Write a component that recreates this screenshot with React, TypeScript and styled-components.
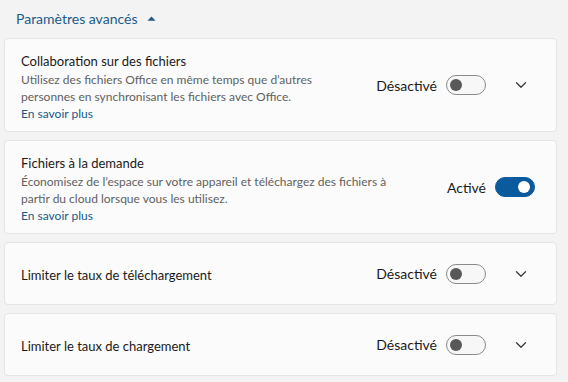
import styled, { createGlobalStyle } from "styled-components";

const GlobalStyle = createGlobalStyle`
  html, body {
    margin: 0;
    padding: 0;
    background: #f3f3f3;
  }
  body {
    font-family: Lato, "Noto Sans", sans-serif;
    color: #1a1a1a;
  }
`;

const Page = styled.div`
  width: 568px;
  height: 382px;
  overflow: hidden;
  padding: 8px 11px 0 4px;
  box-sizing: border-box;
`;

const SectionHeader = styled.button`
  display: flex;
  align-items: center;
  gap: 10px;
  border: none;
  background: none;
  padding: 0 0 0 12px;
  height: 20px;
  font: inherit;
  font-size: 14px;
  color: #1c5b88;
  cursor: pointer;
  margin-bottom: 10px;
`;

const List = styled.div`
  display: flex;
  flex-direction: column;
  gap: 8px;
`;

const Card = styled.div<{ $tall?: boolean }>`
  display: flex;
  align-items: center;
  height: ${(p) => (p.$tall ? "94px" : "63px")};
  box-sizing: border-box;
  padding: 0 21px 0 16px;
  background: #fbfbfb;
  border: 1px solid #e5e5e5;
  border-radius: 4px;
`;

const Texts = styled.div`
  flex: 1;
  display: flex;
  flex-direction: column;
  padding: 4px 32px 0 0;
`;

const Title = styled.div`
  font-size: 13px;
  line-height: 19px;
  color: #1a1a1a;
`;

const Desc = styled.div`
  font-size: 12px;
  line-height: 17px;
  color: #616161;
`;

const Link = styled.a`
  font-size: 12px;
  line-height: 17px;
  color: #185a88;
  text-decoration: none;
`;

const Controls = styled.div`
  display: flex;
  align-items: center;
`;

const StateLabel = styled.span`
  font-size: 14px;
  color: #1a1a1a;
  margin-right: 9px;
`;

const Toggle = styled.div<{ $on?: boolean }>`
  position: relative;
  width: 40px;
  height: 20px;
  box-sizing: border-box;
  border-radius: 10px;
  border: 1px solid ${(p) => (p.$on ? "#0a5a9e" : "#8a8a8a")};
  background: ${(p) => (p.$on ? "#0a5a9e" : "#f7f7f7")};
  &::after {
    content: "";
    position: absolute;
    top: 3px;
    left: ${(p) => (p.$on ? "22px" : "3px")};
    width: 12px;
    height: 12px;
    border-radius: 50%;
    background: ${(p) => (p.$on ? "#ffffff" : "#585858")};
  }
`;

const Chevron = styled.div`
  width: 28px;
  margin-left: 21px;
  display: flex;
  justify-content: center;
  align-items: center;
`;

const ChevronDown = () => (
  <svg width="12" height="8" viewBox="0 0 12 8">
    <path d="M1.5 1.8 L6 6.2 L10.5 1.8" fill="none" stroke="#3a3a3a" strokeWidth="1.3" strokeLinecap="round" strokeLinejoin="round" />
  </svg>
);

const CaretUp = () => (
  <svg width="9" height="5" viewBox="0 0 9 5">
    <path d="M0.5 4.8 L4.5 0.5 L8.5 4.8 Z" fill="#1c5b88" />
  </svg>
);

interface SettingProps {
  title: string;
  desc?: string;
  link?: boolean;
  on?: boolean;
  expandable?: boolean;
}

function Setting({ title, desc, link, on, expandable }: SettingProps) {
  return (
    <Card $tall={!!desc}>
      <Texts>
        <Title>{title}</Title>
        {desc && <Desc>{desc}</Desc>}
        {link && <Link href="#">En savoir plus</Link>}
      </Texts>
      <Controls>
        <StateLabel>{on ? "Activé" : "Désactivé"}</StateLabel>
        <Toggle $on={on} />
        {expandable && (
          <Chevron>
            <ChevronDown />
          </Chevron>
        )}
      </Controls>
    </Card>
  );
}

export default function App() {
  return (
    <>
      <GlobalStyle />
      <Page>
        <SectionHeader>
          Paramètres avancés
          <CaretUp />
        </SectionHeader>
        <List>
          <Setting
            title="Collaboration sur des fichiers"
            desc="Utilisez des fichiers Office en même temps que d’autres personnes en synchronisant les fichiers avec Office."
            link
            expandable
          />
          <Setting
            title="Fichiers à la demande"
            desc="Économisez de l’espace sur votre appareil et téléchargez des fichiers à partir du cloud lorsque vous les utilisez."
            link
            on
          />
          <Setting title="Limiter le taux de téléchargement" expandable />
          <Setting title="Limiter le taux de chargement" expandable />
        </List>
      </Page>
    </>
  );
}
